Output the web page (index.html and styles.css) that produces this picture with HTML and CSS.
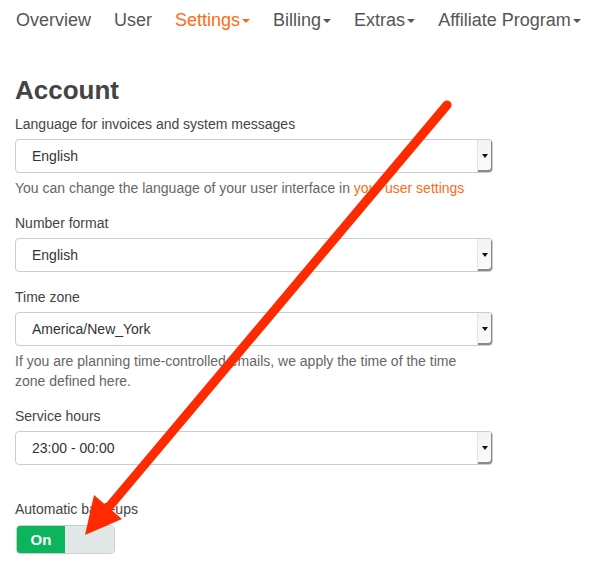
FILE: index.html
```html
<!DOCTYPE html>
<html>
<head>
<meta charset="utf-8">
<link rel="stylesheet" href="styles.css">
</head>
<body>
<div class="page">
  <nav class="nav">
    <a class="nav-item">Overview</a>
    <a class="nav-item">User</a>
    <a class="nav-item active">Settings<span class="caret"></span></a>
    <a class="nav-item">Billing<span class="caret"></span></a>
    <a class="nav-item">Extras<span class="caret"></span></a>
    <a class="nav-item">Affiliate Program<span class="caret"></span></a>
  </nav>

  <h1 class="title">Account</h1>

  <div class="group">
    <div class="label">Language for invoices and system messages</div>
    <div class="select"><span class="value">English</span><span class="btn"><span class="btn-caret"></span></span></div>
    <p class="help">You can change the language of your user interface in <a class="link">your user settings</a></p>
  </div>

  <div class="group">
    <div class="label">Number format</div>
    <div class="select"><span class="value">English</span><span class="btn"><span class="btn-caret"></span></span></div>
  </div>

  <div class="group">
    <div class="label">Time zone</div>
    <div class="select"><span class="value">America/New_York</span><span class="btn"><span class="btn-caret"></span></span></div>
    <p class="help">If you are planning time-controlled emails, we apply the time of the time zone defined here.</p>
  </div>

  <div class="group">
    <div class="label">Service hours</div>
    <div class="select"><span class="value">23:00 - 00:00</span><span class="btn"><span class="btn-caret"></span></span></div>
  </div>

  <div class="group group-last">
    <div class="label">Automatic back-ups</div>
    <div class="toggle"><span class="toggle-on">On</span><span class="toggle-off"></span></div>
  </div>
</div>

<svg class="arrow" width="594" height="563" viewBox="0 0 594 563">
  <line x1="447" y1="105" x2="103" y2="514" stroke="#ff2a00" stroke-width="9" stroke-linecap="round"/>
  <polygon points="85,535 94,495 122,519" fill="#ff2a00"/>
</svg>
</body>
</html>
```

FILE: styles.css
```css
html, body {
  margin: 0;
  padding: 0;
  background: #fff;
}
body {
  font-family: "Liberation Sans", Arial, sans-serif;
  color: #444;
  font-size: 14px;
  line-height: 20px;
}
.page {
  padding-left: 15px;
  width: 478px;
}
.nav {
  display: flex;
  gap: 23px;
  padding-top: 10px;
  padding-left: 1px;
  white-space: nowrap;
}
.nav-item {
  font-size: 18px;
  line-height: 20px;
  color: #555;
  display: inline-flex;
  align-items: center;
}
.nav-item.active {
  color: #ff6a13;
}
.caret {
  display: inline-block;
  width: 0;
  height: 0;
  margin-left: 2px;
  margin-top: 2px;
  border-left: 4px solid transparent;
  border-right: 4px solid transparent;
  border-top: 4px solid currentColor;
}
.title {
  margin: 45px 0 9px 0;
  font-size: 26px;
  line-height: 30px;
  font-weight: bold;
  color: #444;
}
.group {
  margin-bottom: 15px;
}
.group-last {
  margin-top: 34px;
}
.label {
  margin-bottom: 5px;
  color: #444;
}
.group-last .label {
  margin-bottom: 6px;
}
.select {
  box-sizing: border-box;
  height: 34px;
  border: 1px solid #ccc;
  border-radius: 4px;
  display: flex;
  align-items: center;
  padding-left: 16px;
  color: #333;
}
.value {
  flex: 1;
}
.btn {
  align-self: stretch;
  width: 14px;
  background: linear-gradient(#f3f3f3, #fbfbfb);
  border-left: 1px solid #e4e4e4;
  box-shadow: inset -1px -2px 0 #8a8a8a;
  border-radius: 0 3px 3px 0;
  display: flex;
  align-items: center;
  justify-content: center;
}
.btn-caret {
  width: 0;
  height: 0;
  margin-right: 1px;
  border-left: 3px solid transparent;
  border-right: 3px solid transparent;
  border-top: 4px solid #111;
}
.help {
  margin: 5px 0 0 0;
  max-width: 465px;
  color: #666;
}
.link {
  color: #ff6a13;
}
.toggle {
  box-sizing: border-box;
  display: flex;
  width: 99px;
  height: 29px;
  margin-left: 1px;
  border: 1px solid #c9cfcf;
  border-radius: 4px;
  overflow: hidden;
}
.toggle-on {
  width: 48px;
  background: #0cb45c;
  color: #fff;
  font-size: 15px;
  font-weight: bold;
  display: flex;
  align-items: center;
  justify-content: center;
}
.toggle-off {
  flex: 1;
  background: #e2e7e7;
}
.arrow {
  position: absolute;
  left: 0;
  top: 0;
  pointer-events: none;
}
```
